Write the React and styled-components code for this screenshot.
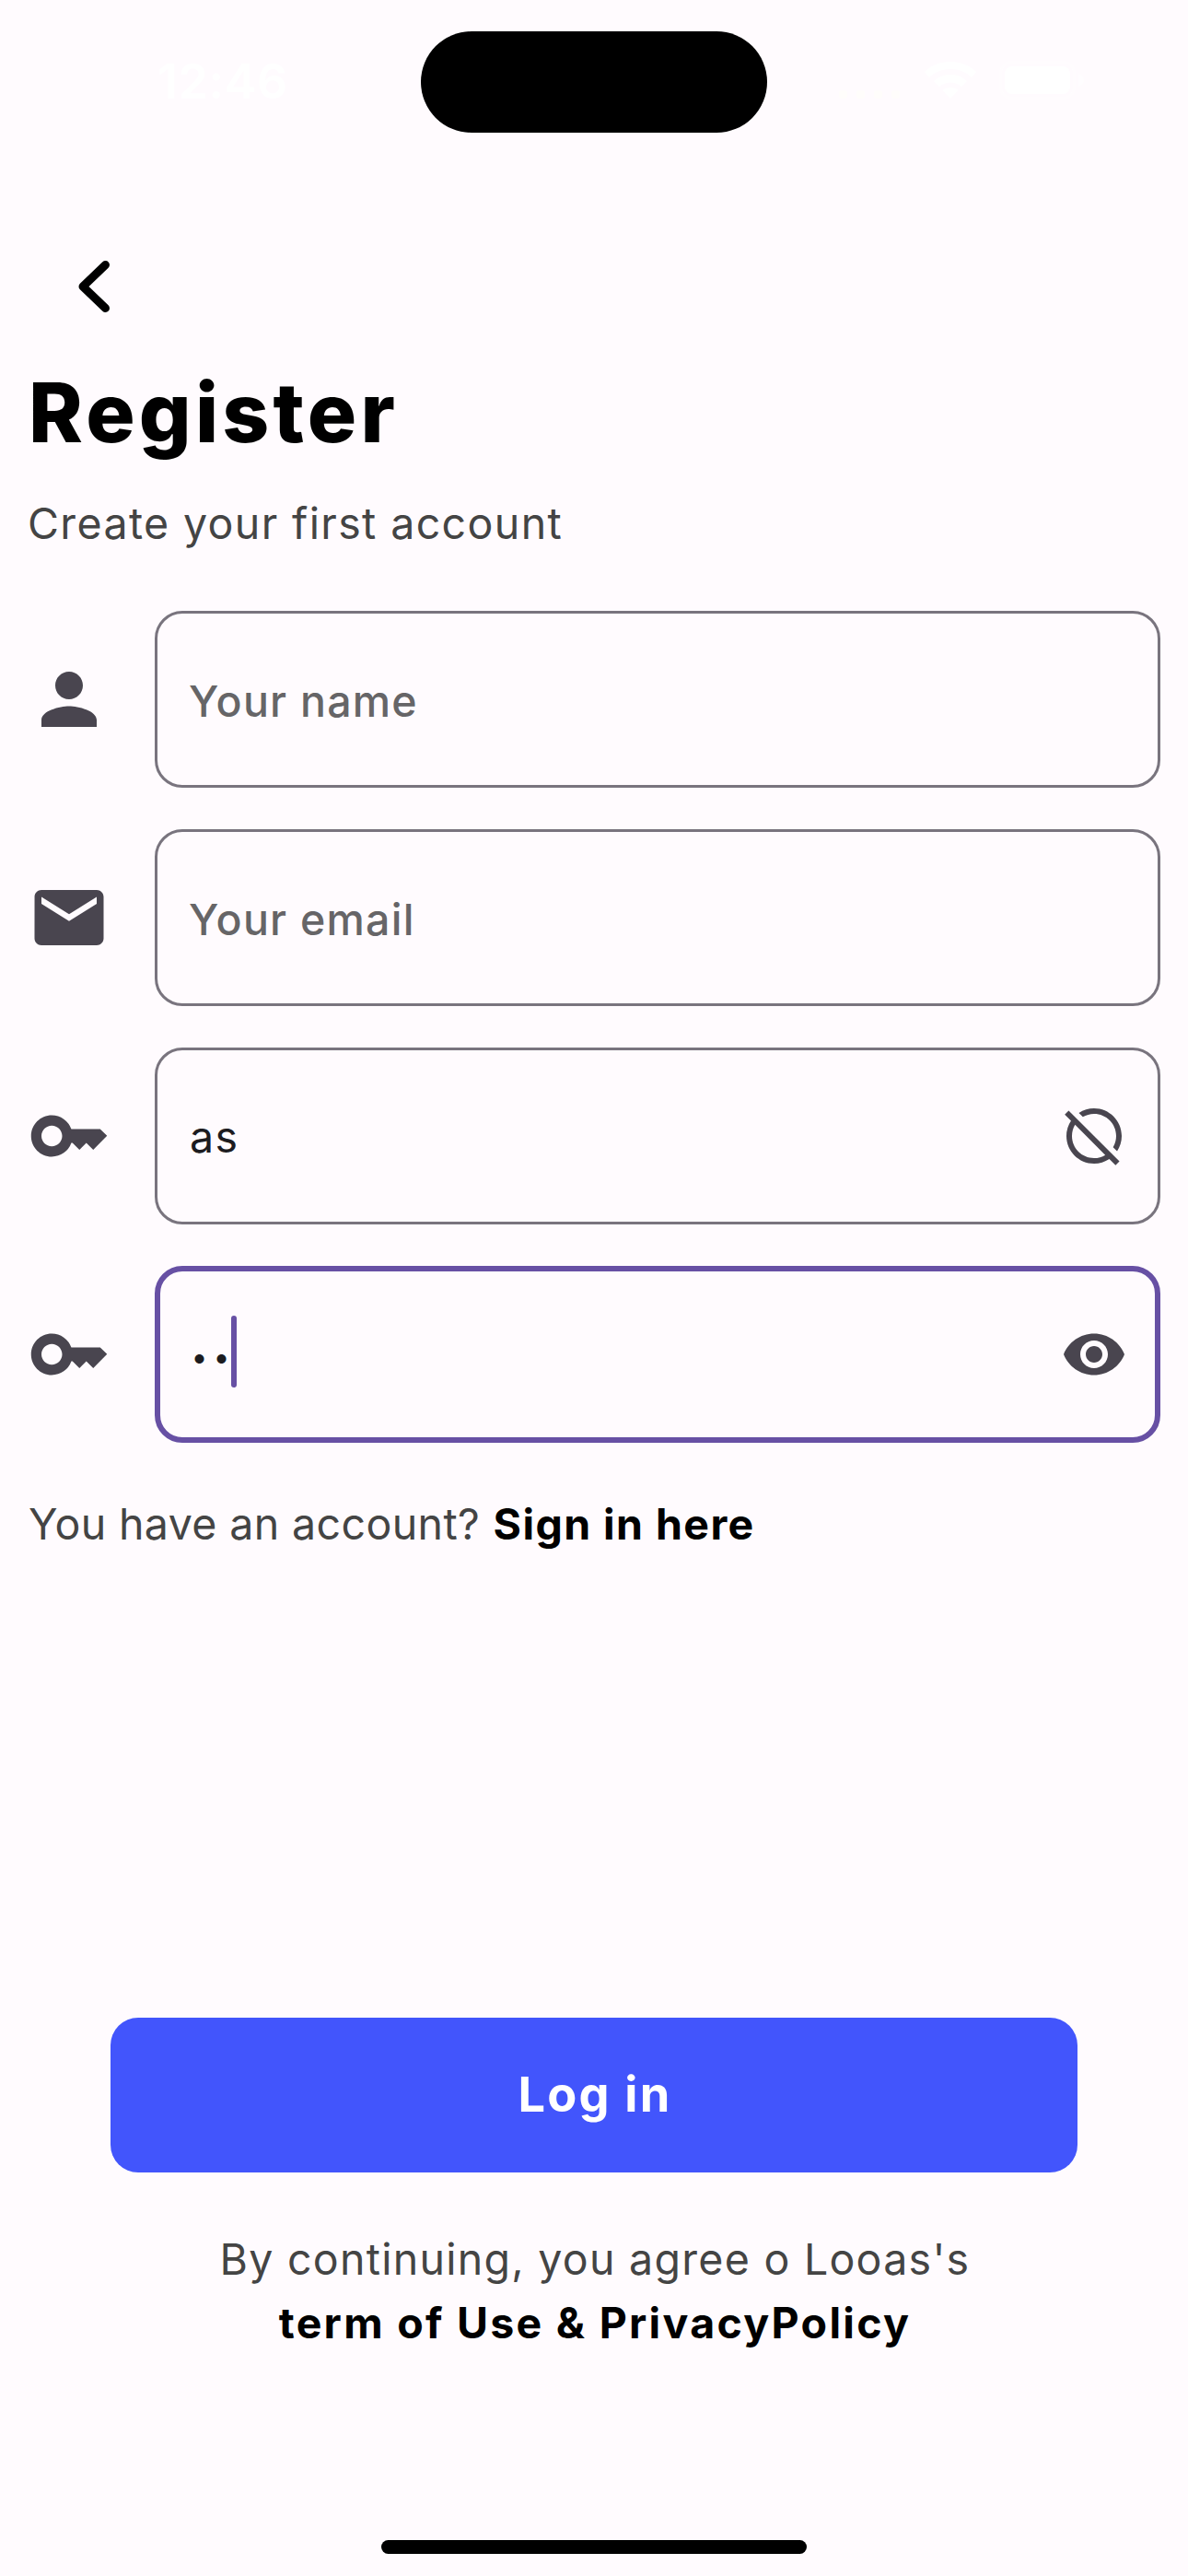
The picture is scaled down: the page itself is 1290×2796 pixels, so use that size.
import React from "react";
import styled, { createGlobalStyle } from "styled-components";
import { MdPerson, MdEmail, MdKey, MdHideSource, MdVisibility } from "react-icons/md";

const color = {
  surface: "#fffbfe",
  icon: "#49454f",
  outline: "#79747e",
  primary: "#6750a4",
  ink: "#1c1b1f",
  muted: "#444444",
  placeholder: "#666567",
  action: "#4255fc",
};

const GlobalStyle = createGlobalStyle`
  *, *::before, *::after { box-sizing: border-box; }
  body {
    margin: 0;
    background: ${color.surface};
    font-family: Inter, "Liberation Sans", sans-serif;
    font-kerning: normal;
  }
`;

const Screen = styled.main`
  display: flex;
  flex-direction: column;
  width: 1290px;
  height: 2796px;
  overflow: hidden;
  background: ${color.surface};
`;

const StatusBar = styled.header`
  display: grid;
  grid-template-columns: 457px 376px 1fr;
  align-items: center;
  height: 177px;
  color: #ffffff;
`;

const Clock = styled.time`
  padding-left: 171px;
  font-size: 52px;
  font-weight: 600;
  line-height: 64px;
  letter-spacing: 0.6px;
`;

const Island = styled.div`
  height: 110px;
  margin-top: 1px;
  border-radius: 55px;
  background: #000000;
`;

const StatusIcons = styled.div`
  display: flex;
  align-items: center;
  gap: 24px;
  padding: 0 0 4px 78px;
`;

const Nav = styled.nav`
  height: 217px;
  padding: 104px 0 0 72px;
`;

const BackButton = styled.button`
  display: block;
  width: 60px;
  height: 60px;
  padding: 0;
  border: 0;
  background: none;
  color: #000000;

  svg {
    display: block;
  }
`;

const Title = styled.h1`
  margin: 0;
  padding-left: 31px;
  color: #000000;
  font-size: 89px;
  font-weight: 800;
  line-height: 108px;
  letter-spacing: 4.2px;
`;

const Subtitle = styled.p`
  margin: 32px 0 61px;
  padding-left: 30px;
  color: ${color.muted};
  font-size: 46.5px;
  line-height: 68px;
  letter-spacing: 1.38px;
`;

const Form = styled.form`
  display: flex;
  flex-direction: column;
  gap: 45px;
  padding: 0 30px;
`;

const FieldRow = styled.label`
  display: flex;
  align-items: center;
  gap: 48px;

  > svg {
    flex: none;
    color: ${color.icon};
  }
`;

const FieldBox = styled.div`
  display: flex;
  flex: 1;
  align-items: center;
  justify-content: space-between;
  height: 192px;
  padding: 0 ${(p) => 36 - (p.$focused ? 6 : 3)}px 0 ${(p) => 37 - (p.$focused ? 6 : 3)}px;
  border: ${(p) => (p.$focused ? `6px solid ${color.primary}` : `3px solid ${color.outline}`)};
  border-radius: 30px;
  color: ${color.icon};
`;

const Placeholder = styled.span`
  padding-top: 4px;
  color: ${color.placeholder};
  font-size: 46.5px;
  font-weight: 500;
  line-height: 64px;
  letter-spacing: 1.24px;
`;

const Value = styled.span`
  padding: 2px 0 0 1px;
  color: ${color.ink};
  font-size: 46.5px;
  line-height: 64px;
  letter-spacing: 1.3px;
`;

const Masked = styled.span`
  display: grid;
  grid-template-columns: 24px 24px 6px;
  align-items: center;
  margin: -6px 0 0 -2px;
  color: ${color.ink};
  font-size: 32px;
  line-height: 40px;
`;

const Bullet = styled.span`
  display: flex;
  justify-content: center;
  padding: 11px 0 0 3px;
`;

const Caret = styled.span`
  height: 78px;
  border-radius: 3px;
  background: ${color.primary};
`;

const SignIn = styled.p`
  margin: 54px 0 502px;
  padding-left: 31px;
  color: ${color.muted};
  font-size: 46.5px;
  line-height: 68px;
  letter-spacing: 0.38px;
`;

const SignInLink = styled.a`
  margin-left: 1px;
  color: #000000;
  font-weight: 700;
  letter-spacing: 1.42px;
`;

const LoginButton = styled.button`
  height: 168px;
  margin: 0 120px;
  padding: 0 0 3px 2px;
  border: 0;
  border-radius: 30px;
  background: ${color.action};
  color: #ffffff;
  font-family: inherit;
  font-size: 52.3px;
  font-weight: 650;
  line-height: 64px;
  letter-spacing: 2.2px;
`;

const Terms = styled.p`
  margin: 60px 0 201px;
  padding-left: 2px;
  color: ${color.muted};
  font-size: 46.5px;
  line-height: 69px;
  letter-spacing: 1.27px;
  text-align: center;
`;

const TermsLink = styled.a`
  display: block;
  color: #000000;
  font-weight: 700;
  letter-spacing: 2.27px;
`;

const HomeIndicator = styled.div`
  align-self: center;
  width: 462px;
  height: 15px;
  border-radius: 8px;
  background: #000000;
`;

function SignalIcon() {
  return (
    <svg width="68" height="40" viewBox="0 0 68 40" fill="#fffdfb">
      <rect x="0" y="31" width="9" height="9" rx="3" />
      <rect x="19" y="31" width="9" height="9" rx="3" />
      <rect x="38" y="31" width="9" height="9" rx="3" />
      <rect x="57" y="31" width="9" height="9" rx="3" />
    </svg>
  );
}

function WifiIcon() {
  return (
    <svg width="58" height="42" viewBox="0 0 58 42" fill="currentColor">
      <path d="M29 1C18 1 8 5 1 12l5 6C12 12 20 9 29 9s17 3 23 9l5-6C50 5 40 1 29 1Z" />
      <path d="M29 15c-7 0-13 2.500-18 7l6 6c3.500-3 7.500-4.500 12-4.500S37.500 25 41 28l6-6c-5-4.500-11-7-18-7Z" />
      <path d="M29 29c-4 0-6.500 1.200-8.500 3L29 41l8.500-9c-2-1.800-4.500-3-8.500-3Z" />
    </svg>
  );
}

function BatteryIcon() {
  return (
    <svg width="94" height="42" viewBox="0 0 94 42" fill="currentColor">
      <rect x="1.500" y="1.500" width="80" height="39" rx="12" fill="none" stroke="currentColor" strokeOpacity=".4" strokeWidth="3" />
      <rect x="6" y="6" width="71" height="30" rx="8" />
      <path d="M86 14c4 1 6 4 6 7s-2 6-6 7Z" fillOpacity=".5" />
    </svg>
  );
}

function Field({ icon: Icon, focused, trailing: Trailing, children }) {
  return (
    <FieldRow>
      <Icon size={90} />
      <FieldBox $focused={focused}>
        {children}
        {Trailing && <Trailing size={72} />}
      </FieldBox>
    </FieldRow>
  );
}

export default function App() {
  return (
    <Screen>
      <GlobalStyle />
      <StatusBar>
        <Clock>12:46</Clock>
        <Island />
        <StatusIcons>
          <SignalIcon />
          <WifiIcon />
          <BatteryIcon />
        </StatusIcons>
      </StatusBar>
      <Nav>
        <BackButton aria-label="Back">
          <svg width="60" height="60" viewBox="0 0 60 60" fill="none" stroke="currentColor" strokeWidth="9" strokeLinecap="round" strokeLinejoin="round">
            <path d="M42.500 6.500 18 30l24.500 23.500" />
          </svg>
        </BackButton>
      </Nav>
      <Title>Register</Title>
      <Subtitle>Create your first account</Subtitle>
      <Form>
        <Field icon={MdPerson}>
          <Placeholder>Your name</Placeholder>
        </Field>
        <Field icon={MdEmail}>
          <Placeholder>Your email</Placeholder>
        </Field>
        <Field icon={MdKey} trailing={MdHideSource}>
          <Value>as</Value>
        </Field>
        <Field icon={MdKey} focused trailing={MdVisibility}>
          <Masked>
            <Bullet>•</Bullet>
            <Bullet>•</Bullet>
            <Caret />
          </Masked>
        </Field>
      </Form>
      <SignIn>
        You have an account? <SignInLink>Sign in here</SignInLink>
      </SignIn>
      <LoginButton>Log in</LoginButton>
      <Terms>
        By continuing, you agree o Looas's
        <TermsLink>term of Use &amp; PrivacyPolicy</TermsLink>
      </Terms>
      <HomeIndicator />
    </Screen>
  );
}
